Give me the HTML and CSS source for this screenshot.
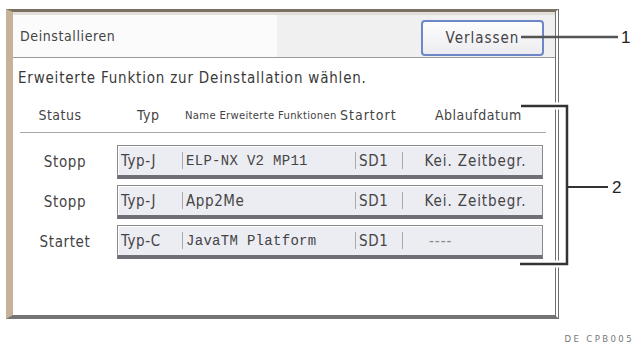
FILE: index.html
```html
<!DOCTYPE html>
<html lang="de">
<head>
    <meta charset="UTF-8">
    <meta name="viewport" content="width=device-width, initial-scale=1.0">
    <title>Deinstallieren</title>
    <link rel="stylesheet" href="styles.css">
</head>
<body>
    <div class="page">
        <div class="panel">
            <div class="titlebar">
                <div class="title-field">Deinstallieren</div>
                <button type="button" class="exit-btn">Verlassen</button>
            </div>

            <p class="hint">Erweiterte Funktion zur Deinstallation wählen.</p>

            <div class="thead">
                <span class="h-status">Status</span>
                <span class="h-typ">Typ</span>
                <span class="h-name">Name Erweiterte Funktionen</span>
                <span class="h-place">Startort</span>
                <span class="h-date">Ablaufdatum</span>
            </div>

            <div class="trow">
                <span class="status">Stopp</span>
                <div class="entry">
                    <span class="c-typ">Typ-J</span>
                    <span class="sep"></span>
                    <span class="c-name mono">ELP-NX V2 MP11</span>
                    <span class="sep"></span>
                    <span class="c-place">SD1</span>
                    <span class="sep"></span>
                    <span class="c-date">Kei. Zeitbegr.</span>
                </div>
            </div>

            <div class="trow">
                <span class="status">Stopp</span>
                <div class="entry">
                    <span class="c-typ">Typ-J</span>
                    <span class="sep"></span>
                    <span class="c-name">App2Me</span>
                    <span class="sep"></span>
                    <span class="c-place">SD1</span>
                    <span class="sep"></span>
                    <span class="c-date">Kei. Zeitbegr.</span>
                </div>
            </div>

            <div class="trow">
                <span class="status">Startet</span>
                <div class="entry">
                    <span class="c-typ">Typ-C</span>
                    <span class="sep"></span>
                    <span class="c-name mono">JavaTM Platform</span>
                    <span class="sep"></span>
                    <span class="c-place">SD1</span>
                    <span class="sep"></span>
                    <span class="c-date dashes">----</span>
                </div>
            </div>
        </div>

        <div class="figcode">DE CPB005</div>

        <!-- callout lines -->
        <svg class="callouts" width="643" height="346" viewBox="0 0 643 346">
            <line x1="521" y1="37" x2="618" y2="37" stroke="#555" stroke-width="2.5"/>
            <text x="621" y="43" class="callout-num">1</text>

            <polyline points="521,106 567,106 567,264 520,264" fill="none" stroke="#fff" stroke-width="7"/>
            <polyline points="521,106 567,106 567,264 520,264" fill="none" stroke="#333" stroke-width="2.5"/>
            <line x1="567" y1="187" x2="608" y2="187" stroke="#333" stroke-width="2"/>
            <text x="612" y="193" class="callout-num">2</text>
        </svg>
    </div>
</body>
</html>
```

FILE: styles.css
```css
body {
    margin: 0;
    padding: 0;
    background-color: #fff;
    font-family: "DejaVu Sans Condensed", "DejaVu Sans", sans-serif;
    font-stretch: condensed;
    color: #333;
}

.page {
    position: relative;
    width: 643px;
    height: 346px;
    padding: 9px 0 0 6px;
    box-sizing: border-box;
}

.panel {
    width: 553px;
    height: 310px;
    box-sizing: border-box;
    border-top: 3px solid #7b7162;
    border-left: 7px solid #c7b299;
    border-right: 4px double #6e6e6e;
    border-bottom: 4px solid #747474;
    background-color: #fff;
}

.titlebar {
    display: flex;
    align-items: center;
    justify-content: space-between;
    height: 46px;
    box-sizing: border-box;
    padding-right: 11px;
    border-top: 3px solid #e2ded8;
    border-bottom: 1px solid #9a9a9a;
    background-color: #f0f0f0;
}

.title-field {
    width: 264px;
    height: 42px;
    line-height: 42px;
    padding-left: 7px;
    box-sizing: border-box;
    background-color: #fbfbfb;
    font-size: 14px;
    letter-spacing: 0.6px;
    color: #444;
}

.exit-btn {
    width: 123px;
    height: 36px;
    margin-top: 4px;
    border: 2px solid #6d86c8;
    border-radius: 4px;
    background: linear-gradient(#fdfdfd, #ededf1);
    font-family: inherit;
    font-stretch: condensed;
    font-size: 15px;
    letter-spacing: 1px;
    color: #444;
    padding: 0 0 0 0;
}

.hint {
    margin: 10px 0 0 5px;
    line-height: 20px;
    font-size: 15px;
    letter-spacing: 0.8px;
    color: #3a3a3a;
}

.thead {
    display: flex;
    align-items: center;
    height: 28px;
    margin: 17px 9px 0 7px;
    padding-bottom: 7px;
    box-sizing: border-box;
    border-bottom: 1px solid #a8a8a8;
    font-size: 14px;
    letter-spacing: 0.5px;
    color: #444;
}

.h-status {
    width: 80px;
    text-align: center;
}

.h-typ {
    width: 85px;
    padding-left: 37px;
    box-sizing: border-box;
}

.h-name {
    width: 155px;
    font-size: 11.2px;
    letter-spacing: 0.3px;
    white-space: nowrap;
}

.h-place {
    width: 92px;
    letter-spacing: 1px;
}

.h-date {
    flex: 1;
    padding-left: 3px;
}

.trow {
    display: flex;
    align-items: center;
    height: 34px;
    margin: 6px 0 0;
}

.thead + .trow {
    margin-top: 12px;
}

.status {
    width: 104px;
    text-align: center;
    font-size: 15px;
    letter-spacing: 0.6px;
    color: #444;
}

.entry {
    display: flex;
    align-items: center;
    width: 426px;
    height: 34px;
    box-sizing: border-box;
    border: 1px solid #8a8a8a;
    border-bottom: 4px solid #6f6f78;
    box-shadow: inset 1px 1px 0 #fff;
    background-color: #ececf3;
    font-size: 15px;
    letter-spacing: 0.6px;
    color: #444;
}

.sep {
    width: 1px;
    height: 17px;
    background-color: #a9a9b0;
}

.c-typ {
    width: 64px;
    padding-left: 3px;
    box-sizing: border-box;
}

.c-name {
    width: 172px;
    padding-left: 3px;
    box-sizing: border-box;
}

.mono {
    font-family: "Liberation Mono", monospace;
    font-size: 14px;
    letter-spacing: 0.3px;
}

.c-place {
    width: 46px;
    padding-left: 3px;
    box-sizing: border-box;
}

.c-date {
    flex: 1;
    text-align: center;
    padding-left: 6px;
    letter-spacing: 0.9px;
}

.dashes {
    text-align: left;
    padding-left: 26px;
    color: #888;
    letter-spacing: 1px;
}

.figcode {
    margin-top: 14px;
    padding-right: 9px;
    text-align: right;
    font-size: 9.5px;
    letter-spacing: 2.4px;
    color: #777;
}

.callouts {
    position: absolute;
    top: 0;
    left: 0;
}

.callout-num {
    font-family: "Liberation Sans", Arial, sans-serif;
    font-stretch: normal;
    font-size: 17px;
    fill: #222;
}
```
